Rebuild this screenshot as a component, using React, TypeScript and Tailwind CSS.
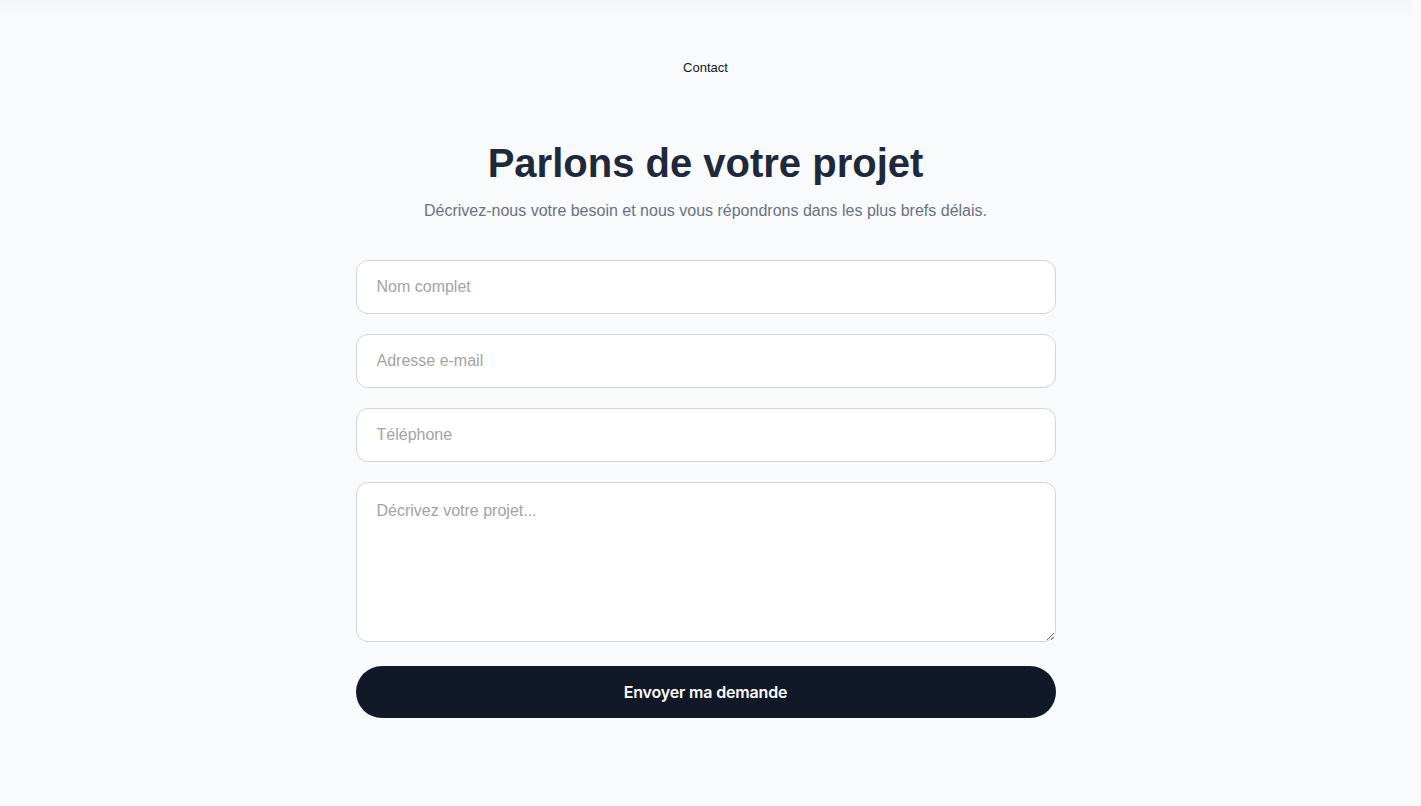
import React from "react"

const fieldClass =
  "w-full h-[54px] rounded-xl border border-gray-300 bg-white px-5 text-base text-gray-900 placeholder:text-[#a3a3a3] outline-none"

export default function App() {
  return (
    <div className="min-h-screen bg-gray-50 pr-[10px] font-['Liberation_Sans',Arial,sans-serif]">
      <div className="h-4 bg-gradient-to-b from-gray-100 to-gray-50" />
      <nav className="flex justify-center pt-[42px]">
        <a href="#" className="text-[13px] text-gray-900">
          Contact
        </a>
      </nav>
      <main className="mx-auto flex w-[700px] flex-col items-center pt-[60px]">
        <h1 className="text-[40px] font-bold leading-tight text-[#1e293b]">Parlons de votre projet</h1>
        <p className="mt-[11px] text-base text-gray-500">
          Décrivez-nous votre besoin et nous vous répondrons dans les plus brefs délais.
        </p>
        <form className="mt-[37px] flex w-full flex-col gap-5">
          <input type="text" placeholder="Nom complet" className={fieldClass} />
          <input type="email" placeholder="Adresse e-mail" className={fieldClass} />
          <input type="tel" placeholder="Téléphone" className={fieldClass} />
          <textarea
            placeholder="Décrivez votre projet..."
            className="h-40 w-full rounded-xl border border-gray-300 bg-white px-5 py-4 text-base text-gray-900 placeholder:text-[#a3a3a3] outline-none"
          />
          <button
            type="button"
            className="mt-1 h-[52px] w-full rounded-full bg-[#111827] font-['Inter',sans-serif] text-base font-semibold tracking-[-0.01em] text-white"
          >
            Envoyer ma demande
          </button>
        </form>
      </main>
    </div>
  )
}
